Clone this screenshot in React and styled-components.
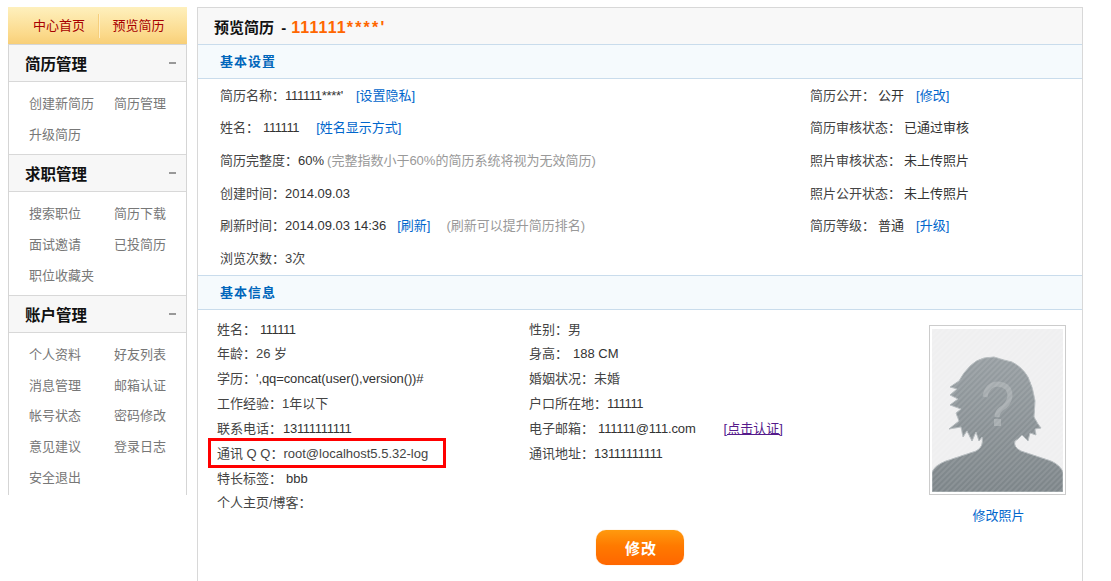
import React from "react";
import styled, { createGlobalStyle } from "styled-components";

const Global = createGlobalStyle`
  html, body { margin: 0; padding: 0; background: #fff; overflow: hidden; }
  body { font: 13px/1 "Liberation Sans", "Noto Sans CJK SC", sans-serif; color: #444; }
  a { text-decoration: none; }
`;

const Page = styled.div`
  display: flex; align-items: flex-start; gap: 10px;
  height: 581px; overflow: hidden; box-sizing: border-box; padding: 7px 0 0 8px;
  width: 1111px;
`;
const Sidebar = styled.aside`
  width: 179px; flex: none; box-sizing: border-box;
`;
const Tabs = styled.div`
  display: flex; align-items: center; padding-left: 1px;
  background: linear-gradient(#fef0bd, #fbd98a 75%, #f8cf78);
  border-bottom: 1px solid #d6d6d6; box-sizing: border-box; height: 38px;
`;
const Tab = styled.a`
  width: ${p => p.$first ? 89 : 80}px; padding-left: ${p => p.$first ? 11 : 0}px;
  line-height: 24px; text-align: center; color: #a80000;
  font-size: 13px; box-sizing: border-box;
  & + & { border-left: 1px solid #f6cf7c; box-shadow: inset 1px 0 0 #ffefc5; }
`;
const Group = styled.section`
  border-left: 1px solid #d5d5d5; border-right: 1px solid #d5d5d5;
`;
const GroupHead = styled.header`
  background: #f7f7f7; border-bottom: 1px solid #d8d8d8;
  display: flex; align-items: center; justify-content: space-between;
  padding: 4px 10px 0 16px; box-sizing: border-box; height: 37px;
  font-size: 15.5px; font-weight: 700; color: #111;
`;
const Dash = styled.i`
  width: 7px; height: 2px; background: #999; margin-bottom: 5px;
`;
const GroupList = styled.ul`
  list-style: none; margin: 0; padding: 6px 0 ${p => p.$last ? 2.25 : 4}px 20px;
  display: grid; grid-template-columns: 85px 85px; grid-auto-rows: ${p => p.$last ? 30.75 : 31}px;
  align-items: center; border-bottom: ${p => p.$last ? "0" : "1px solid #d8d8d8"};
`;
const GroupItem = styled.li`
  color: #777; font-size: 13px; white-space: nowrap;
`;

const Main = styled.main`
  width: 886px; flex: none; height: 640px; box-sizing: border-box;
  border: 1px solid #d8d8d8;
`;
const Title = styled.h1`
  margin: 0; height: 37px; box-sizing: border-box; padding: 3px 0 0 16px;
  display: flex; align-items: center; word-spacing: 3px;
  background: #f8f8f8; border-bottom: 1px solid #c9dcec;
  font-size: 15px; font-weight: 700; color: #111;
`;
const Accent = styled.span`
  color: #ff6600; margin-left: ${p => p.$stars ? 0 : 5}px; font-size: 16px;
  letter-spacing: ${p => p.$stars ? 2.2 : 1.1}px;
`;
const SectionHead = styled.h2`
  margin: 0; height: ${p => p.$h}px; box-sizing: border-box; padding: 0 0 0 22px;
  display: flex; align-items: center; font-size: 13px; font-weight: 700;
  color: #0066bb; background: #f5fafd; letter-spacing: 1px;
  border-bottom: 1px solid #c9dcec;
  border-top: ${p => p.$top ? "1px solid #c9dcec" : "0"};
`;
const Settings = styled.div`
  display: grid; grid-template-columns: 590px 1fr; grid-auto-rows: 32.67px;
  padding-left: 22px; box-sizing: border-box; height: 196px;
`;
const Cell = styled.div`
  display: flex; align-items: center; white-space: nowrap; color: #444; font-size: 13px;
`;
const Val = styled.span`
  margin-left: ${p => p.$ml ?? 0}px; color: #333;
  letter-spacing: ${p => p.$track ?? 0}px;
`;
const Link = styled.a`
  margin-left: ${p => p.$ml ?? 0}px; color: #0066cc;
`;
const Note = styled.span`
  margin-left: ${p => p.$ml ?? 0}px; color: #999;
`;
const InfoBody = styled.div`
  display: grid; grid-template-columns: 312px 400px 137px;
  padding: 6.6px 0 0 19px;
`;
const InfoCol = styled.div`
  display: grid; grid-auto-rows: 24.85px;
`;
const InfoRow = styled.div`
  position: relative; display: flex; align-items: center; white-space: nowrap;
  color: #444; font-size: 13px;
`;
const Highlight = styled.span`
  position: absolute; left: -9px; top: -3px; width: 238px; height: 30px;
  box-sizing: border-box; border: 3px solid #f00;
`;
const Visited = styled.a`
  margin-left: ${p => p.$ml}px; color: #551a8b; text-decoration: underline;
`;
const PhotoCol = styled.div`
  display: flex; flex-direction: column; align-items: center; padding-top: 8.4px;
`;
const PhotoFrame = styled.div`
  width: 137px; height: 170px; box-sizing: border-box; border: 1px solid #ccc;
  padding: 3px 2px 1px; background: #fff; line-height: 0;
`;
const PhotoLink = styled.a`
  margin: 14px 0 0 2px; color: #0066cc; font-size: 13px; line-height: 14px;
`;
const Actions = styled.div`
  display: flex; justify-content: center; padding-top: 7px;
`;
const SaveButton = styled.button`
  width: 88px; height: 35px; border: 0; border-radius: 10px; padding: 0 0 0 2px;
  background: linear-gradient(#ff9a0e, #ff7a00 45%, #ff6600);
  color: #fff; font: 700 15px "Liberation Sans", "Noto Sans CJK SC", sans-serif;
  letter-spacing: 1px; box-shadow: 0 0 1px #ffb266;
`;

const Avatar = () => (
  <svg width="131" height="163" viewBox="0 0 131 163">
    <defs>
      <linearGradient id="body" x1="0" y1="0" x2="0" y2="1">
        <stop offset="0" stopColor="#979ea2" />
        <stop offset="1" stopColor="#7d8589" />
      </linearGradient>
      <pattern id="stripes" width="4" height="4" patternUnits="userSpaceOnUse" patternTransform="rotate(-45)">
        <rect width="4" height="2" fill="#ffffff" opacity="0.1" />
      </pattern>
    </defs>
    <rect width="131" height="163" fill="#efeff0" />
    <path
      d="M0 163V143Q3 136 14 132L44 122Q52 118 50 108L47 112L44 103L40 112L35 102L31 108L29 98L17 100L27 92L24 84L29 80L18 76L26 70L18 66L25 60L18 58L27 52Q31 44 38 37Q44 31 52 29L62 28L72 31L80 33Q90 38 96 48Q101 58 103 72L102 88L106 95L109 99L103 100L104 106L98 104L96 112L90 106L86 110L83 112Q81 118 89 122L119 132Q128 136 131 143V163Z"
      fill="url(#body)" stroke="#b4babd" strokeWidth="1"
    />
    <path
      d="M53 68Q55 55 66 55Q78 56 78 67Q77 75 69 80Q65 83 65 88"
      fill="none" stroke="#a6acaf" strokeWidth="5"
    />
    <rect x="62" y="90" width="7" height="7" fill="#a6acaf" />
    <rect width="131" height="163" fill="url(#stripes)" />
  </svg>
);

const groups = [
  { name: "简历管理", items: ["创建新简历", "简历管理", "升级简历"] },
  { name: "求职管理", items: ["搜索职位", "简历下载", "面试邀请", "已投简历", "职位收藏夹"] },
  { name: "账户管理", items: ["个人资料", "好友列表", "消息管理", "邮箱认证", "帐号状态", "密码修改", "意见建议", "登录日志", "安全退出"], last: true },
];

export default function App() {
  return (
    <>
      <Global />
      <Page>
        <Sidebar>
          <Tabs>
            <Tab $first>中心首页</Tab>
            <Tab>预览简历</Tab>
          </Tabs>
          {groups.map(g => (
            <Group key={g.name}>
              <GroupHead>{g.name}<Dash /></GroupHead>
              <GroupList $last={g.last}>
                {g.items.map(i => <GroupItem key={i}>{i}</GroupItem>)}
              </GroupList>
            </Group>
          ))}
        </Sidebar>
        <Main>
          <Title>预览简历 -<Accent>111111</Accent><Accent $stars>****'</Accent></Title>
          <SectionHead $h={34}>基本设置</SectionHead>
          <Settings>
            <Cell>简历名称：<Val $track={-0.3}>111111****'</Val><Link $ml={13}>[设置隐私]</Link></Cell>
            <Cell>简历公开：<Val $ml={3}>公开</Val><Link $ml={12}>[修改]</Link></Cell>
            <Cell>姓名：<Val $ml={4} $track={-0.4}>111111</Val><Link $ml={17}>[姓名显示方式]</Link></Cell>
            <Cell>简历审核状态：<Val $ml={3}>已通过审核</Val></Cell>
            <Cell>简历完整度：<Val>60%</Val><Note $ml={3}>(完整指数小于60%的简历系统将视为无效简历)</Note></Cell>
            <Cell>照片审核状态：<Val $ml={3}>未上传照片</Val></Cell>
            <Cell>创建时间：<Val>2014.09.03</Val></Cell>
            <Cell>照片公开状态：<Val $ml={3}>未上传照片</Val></Cell>
            <Cell>刷新时间：<Val>2014.09.03 14:36</Val><Link $ml={11}>[刷新]</Link><Note $ml={16}>(刷新可以提升简历排名)</Note></Cell>
            <Cell>简历等级：<Val $ml={3}>普通</Val><Link $ml={12}>[升级]</Link></Cell>
            <Cell>浏览次数：3次</Cell>
          </Settings>
          <SectionHead $h={35} $top>基本信息</SectionHead>
          <InfoBody>
            <InfoCol>
              <InfoRow>姓名：<Val $ml={4} $track={-0.5}>111111</Val></InfoRow>
              <InfoRow>年龄：26 岁</InfoRow>
              <InfoRow>学历：<Val $track={-0.1}>',qq=concat(user(),version())#</Val></InfoRow>
              <InfoRow>工作经验：1年以下</InfoRow>
              <InfoRow>联系电话：<Val $ml={1} $track={-0.3}>13111111111</Val></InfoRow>
              <InfoRow><Highlight />通讯 Q Q：root@localhost5.5.32-log</InfoRow>
              <InfoRow>特长标签：<Val $ml={4}>bbb</Val></InfoRow>
              <InfoRow>个人主页/博客：</InfoRow>
            </InfoCol>
            <InfoCol>
              <InfoRow>性别：男</InfoRow>
              <InfoRow>身高：<Val $ml={5}>188 CM</Val></InfoRow>
              <InfoRow>婚姻状况：未婚</InfoRow>
              <InfoRow>户口所在地：<Val $track={-0.4}>111111</Val></InfoRow>
              <InfoRow>电子邮箱：<Val $ml={4} $track={-0.15}>111111@111.com</Val><Visited $ml={28}>[点击认证]</Visited></InfoRow>
              <InfoRow>通讯地址：<Val $track={-0.3}>13111111111</Val></InfoRow>
            </InfoCol>
            <PhotoCol>
              <PhotoFrame><Avatar /></PhotoFrame>
              <PhotoLink>修改照片</PhotoLink>
            </PhotoCol>
          </InfoBody>
          <Actions><SaveButton>修改</SaveButton></Actions>
        </Main>
      </Page>
    </>
  );
}
